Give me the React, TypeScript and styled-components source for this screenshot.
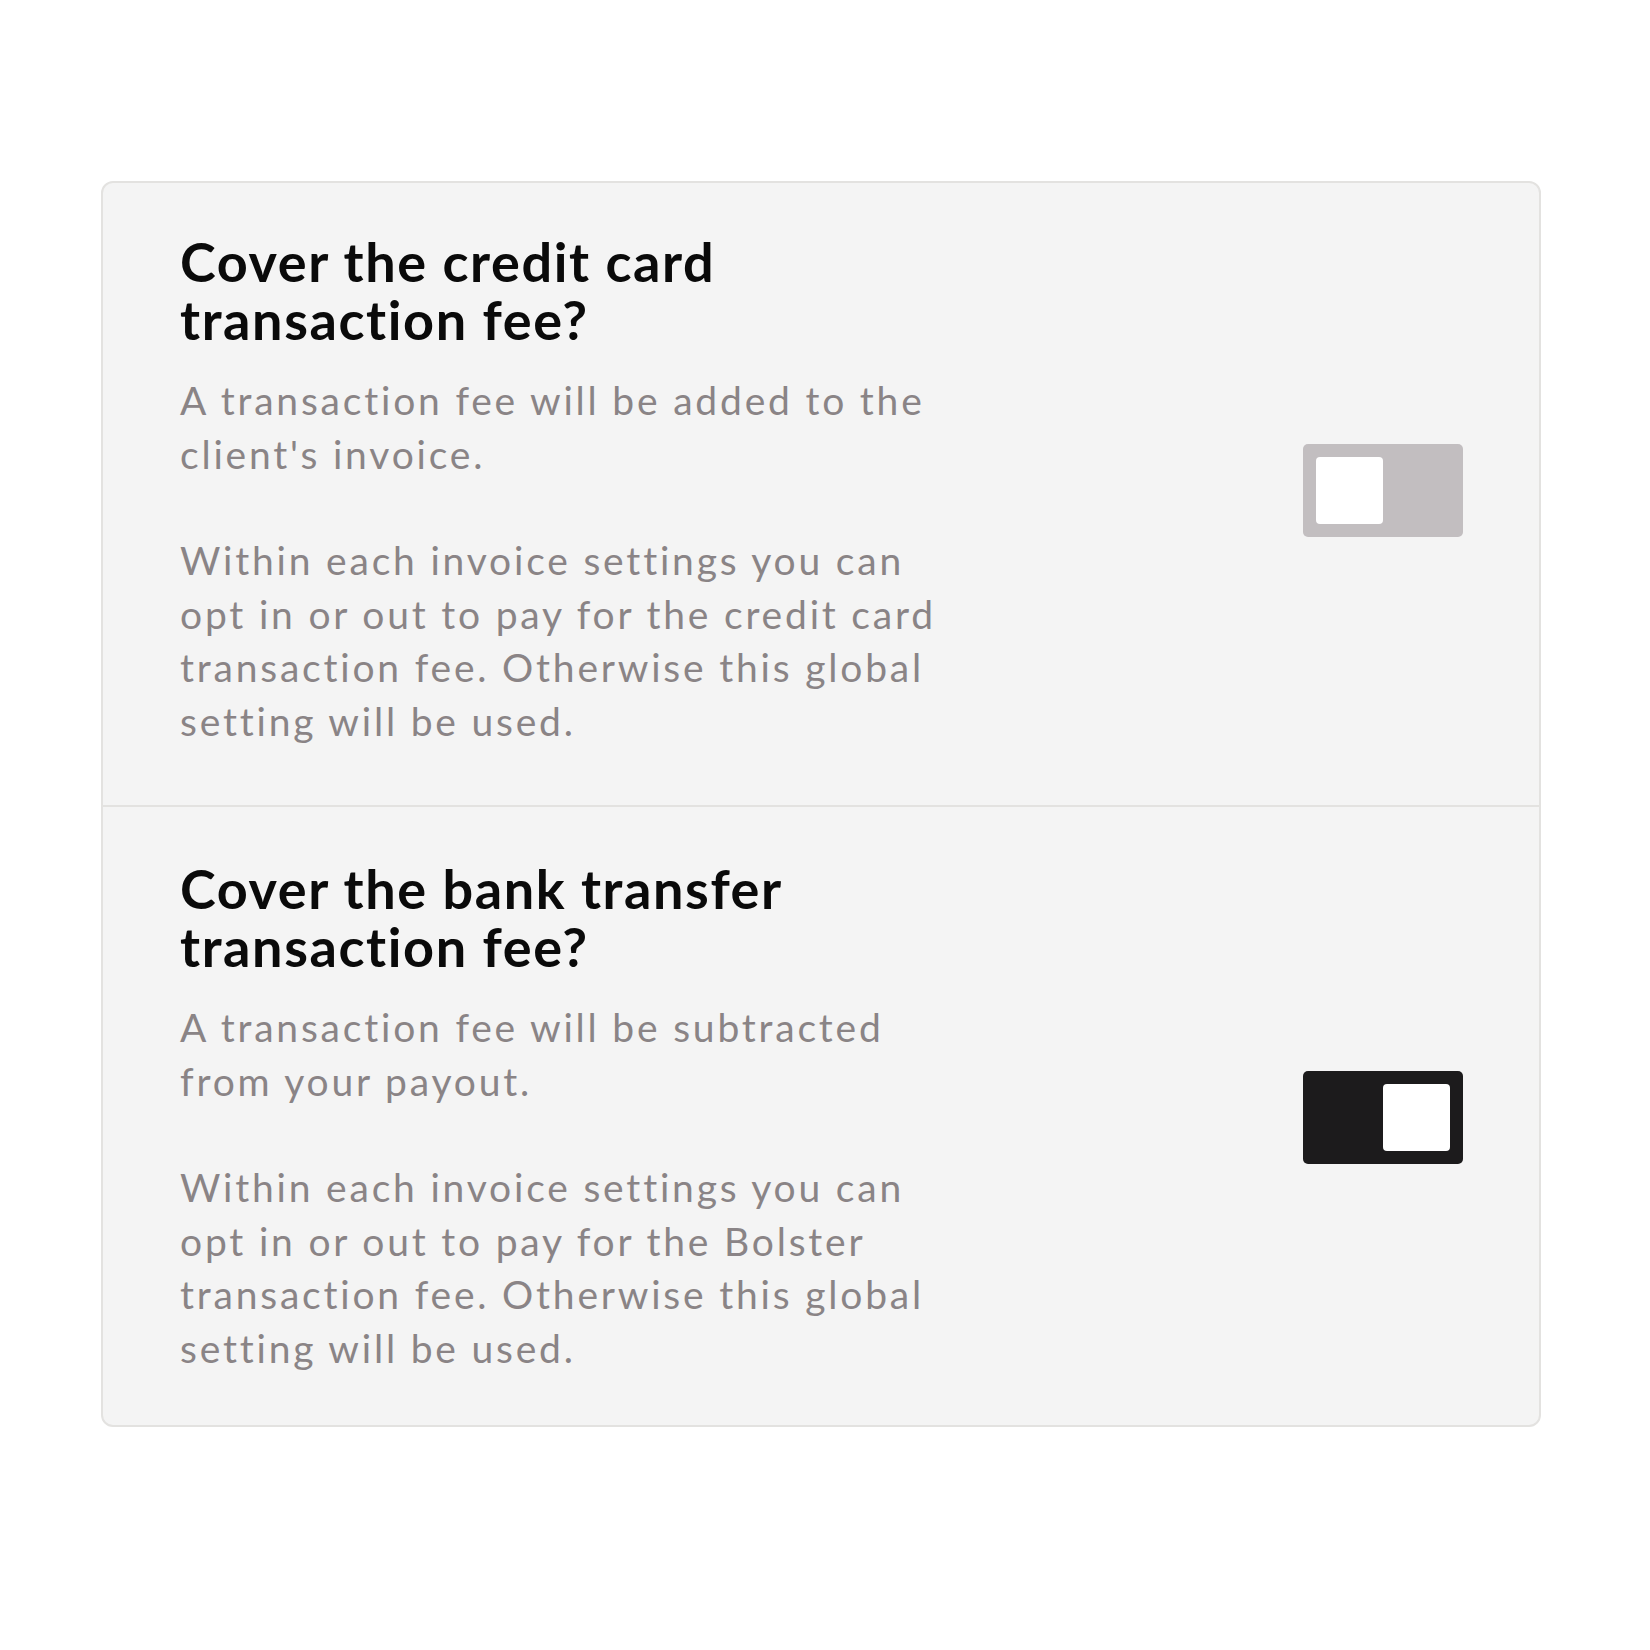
import React, { useState } from "react";
import styled, { createGlobalStyle } from "styled-components";

const GlobalStyle = createGlobalStyle`
  html, body {
    margin: 0;
    padding: 0;
    background: #ffffff;
  }
  body {
    font-family: "Lato", "Noto Sans", sans-serif;
  }
`;

interface FeeSetting {
  id: string;
  title: string[];
  summary: string[];
  detail: string[];
  enabled: boolean;
}

const SETTINGS: FeeSetting[] = [
  {
    id: "credit",
    title: ["Cover the credit card", "transaction fee?"],
    summary: ["A transaction fee will be added to the", "client's invoice."],
    detail: [
      "Within each invoice settings you can",
      "opt in or out to pay for the credit card",
      "transaction fee. Otherwise this global",
      "setting will be used.",
    ],
    enabled: false,
  },
  {
    id: "bank",
    title: ["Cover the bank transfer", "transaction fee?"],
    summary: ["A transaction fee will be subtracted", "from your payout."],
    detail: [
      "Within each invoice settings you can",
      "opt in or out to pay for the Bolster",
      "transaction fee. Otherwise this global",
      "setting will be used.",
    ],
    enabled: true,
  },
];

const lines = (list: string[]) =>
  list.map((line, i) => (
    <React.Fragment key={i}>
      {line}
      {i < list.length - 1 && <br />}
    </React.Fragment>
  ));

const App = () => {
  const [values, setValues] = useState<Record<string, boolean>>(() =>
    Object.fromEntries(SETTINGS.map((s) => [s.id, s.enabled]))
  );

  const onToggle = (id: string) => {
    setValues((prev) => ({ ...prev, [id]: !prev[id] }));
  };

  return (
    <>
      <GlobalStyle />
      <Page>
        <Card>
          {SETTINGS.map((setting, index) => (
            <Row key={setting.id} $first={index === 0}>
              <TextColumn>
                <Title>{lines(setting.title)}</Title>
                <Description>{lines(setting.summary)}</Description>
                <Description $spaced>{lines(setting.detail)}</Description>
              </TextColumn>
              <Toggle
                type="button"
                role="switch"
                aria-checked={values[setting.id]}
                $on={values[setting.id]}
                onClick={() => onToggle(setting.id)}
              >
                <Knob />
              </Toggle>
            </Row>
          ))}
        </Card>
      </Page>
    </>
  );
};

const Page = styled.div`
  width: 1650px;
  min-height: 1650px;
  box-sizing: border-box;
  padding: 181px 0 0 101px;
`;

const Card = styled.div`
  width: 1440px;
  box-sizing: border-box;
  background-color: #f4f4f4;
  border: 2px solid #e3e2e0;
  border-radius: 12px;
  overflow: hidden;
`;

const Row = styled.div<{ $first: boolean }>`
  display: flex;
  align-items: center;
  justify-content: space-between;
  padding: ${(p) => (p.$first ? "50px 76px 57px 77px" : "53px 76px 50px 77px")};
  border-top: ${(p) => (p.$first ? "none" : "2px solid #e3e2e0")};
`;

const TextColumn = styled.div`
  display: flex;
  flex-direction: column;
`;

const Title = styled.h2`
  margin: 0 0 25px;
  font-family: "Lato", "Noto Sans", sans-serif;
  font-size: 54px;
  font-weight: 700;
  line-height: 58px;
  letter-spacing: 1.6px;
  color: #0a0a0a;
`;

const Description = styled.p<{ $spaced?: boolean }>`
  margin: ${(p) => (p.$spaced ? "53px" : "0")} 0 0;
  font-family: "Lato", "Noto Sans", sans-serif;
  font-size: 39px;
  font-weight: 400;
  line-height: 53.5px;
  letter-spacing: 2.8px;
  color: #8a8486;
`;

const Toggle = styled.button<{ $on: boolean }>`
  display: flex;
  align-items: center;
  justify-content: ${(p) => (p.$on ? "flex-end" : "flex-start")};
  flex-shrink: 0;
  width: 160px;
  height: 93px;
  padding: 0 13px;
  border: none;
  border-radius: 5px;
  background-color: ${(p) => (p.$on ? "#1c1b1c" : "#c2bec0")};
  cursor: pointer;
`;

const Knob = styled.span`
  width: 67px;
  height: 67px;
  border-radius: 4px;
  background-color: #ffffff;
`;

export default App;
